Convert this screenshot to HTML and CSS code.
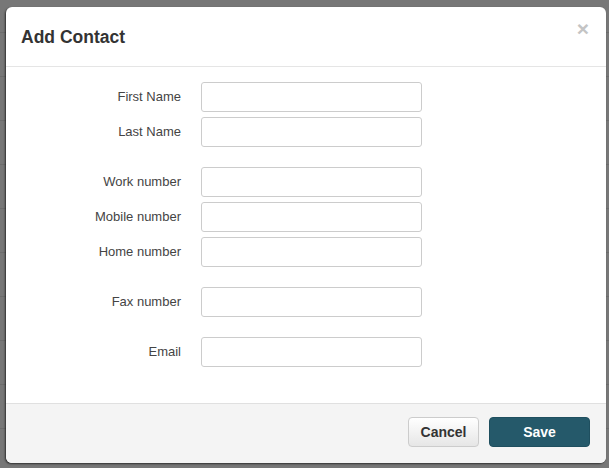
FILE: index.html
```html
<!DOCTYPE html>
<html>
<head>
<meta charset="utf-8">
<link rel="stylesheet" href="styles.css">
</head>
<body>
<div class="modal">
  <div class="modal-header">
    <h4 class="title">Add Contact</h4>
    <span class="close">×</span>
  </div>
  <div class="modal-body">
    <div class="group">
      <div class="row"><label>First Name</label><input type="text"></div>
      <div class="row"><label>Last Name</label><input type="text"></div>
    </div>
    <div class="group">
      <div class="row"><label>Work number</label><input type="text"></div>
      <div class="row"><label>Mobile number</label><input type="text"></div>
      <div class="row"><label>Home number</label><input type="text"></div>
    </div>
    <div class="group">
      <div class="row"><label>Fax number</label><input type="text"></div>
    </div>
    <div class="group">
      <div class="row"><label>Email</label><input type="text"></div>
    </div>
  </div>
  <div class="modal-footer">
    <button class="btn btn-cancel">Cancel</button>
    <button class="btn btn-save">Save</button>
  </div>
</div>
</body>
</html>
```
FILE: styles.css
```css
html, body {
  margin: 0;
  height: 100%;
}
body {
  padding: 7px 0 0 6px;
  box-sizing: border-box;
  background-color: #777;
  background-image: repeating-linear-gradient(to bottom, transparent 0, transparent 43px, #6c6c6c 43px, #6c6c6c 44px);
  background-position: 0 -11px;
  font-family: "Liberation Sans", Arial, sans-serif;
  overflow: hidden;
}
.modal {
  width: 600px;
  height: 456px;
  background: #fff;
  border-radius: 6px;
  box-shadow: -1px 1px 2px rgba(0,0,0,0.6);
  display: flex;
  flex-direction: column;
  overflow: hidden;
}
.modal-header {
  height: 59px;
  flex: none;
  border-bottom: 1px solid #e5e5e5;
  display: flex;
  align-items: center;
  justify-content: space-between;
  padding: 0 15px;
  box-sizing: content-box;
}
.title {
  margin: 0;
  font-size: 17.5px;
  font-weight: bold;
  color: #333;
  position: relative;
  top: 1px;
}
.close {
  font-size: 21px;
  font-weight: bold;
  color: #c4c4c4;
  line-height: 1;
  position: relative;
  top: -8px;
  right: 2px;
}
.modal-body {
  flex: 1;
  padding: 15px 0 0 0;
  display: flex;
  flex-direction: column;
  gap: 20px;
}
.group {
  display: flex;
  flex-direction: column;
  gap: 5px;
}
.row {
  display: flex;
  align-items: center;
}
.row label {
  width: 175px;
  text-align: right;
  font-size: 13px;
  color: #444;
  margin-right: 20px;
  position: relative;
  top: -1px;
}
.row input {
  width: 221px;
  height: 30px;
  box-sizing: border-box;
  border: 1px solid #ccc;
  border-radius: 3px;
  margin: 0;
  padding: 0 8px;
}
.modal-footer {
  height: 60px;
  flex: none;
  background: #f4f4f4;
  border-top: 1px solid #e0e0e0;
  display: flex;
  justify-content: flex-end;
  align-items: flex-start;
  padding: 13px 16px 0 0;
  gap: 10px;
  box-sizing: border-box;
}
.btn {
  height: 30px;
  font-family: "Liberation Sans", Arial, sans-serif;
  font-size: 14px;
  font-weight: bold;
  border-radius: 4px;
  margin: 0;
}
.btn-cancel {
  width: 71px;
  color: #333;
  background: linear-gradient(to bottom, #fff, #e6e6e6);
  border: 1px solid #ccc;
}
.btn-save {
  width: 101px;
  color: #fff;
  background: #25596a;
  border: 1px solid #1f4f5f;
}
```
